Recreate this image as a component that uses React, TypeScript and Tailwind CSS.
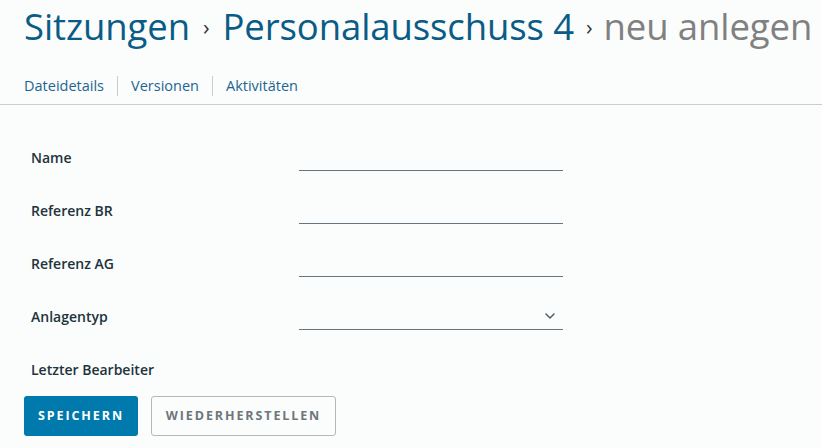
import { ChevronDown } from "lucide-react";

const fields = [
  { label: "Name", kind: "text" },
  { label: "Referenz BR", kind: "text" },
  { label: "Referenz AG", kind: "text" },
  { label: "Anlagentyp", kind: "select" },
  { label: "Letzter Bearbeiter", kind: "none" },
];

const tabs = ["Dateidetails", "Versionen", "Aktivitäten"];

function FormRow({ label, kind }: { label: string; kind: string }) {
  return (
    <div className="flex h-7 items-center">
      <label className="w-[268px] shrink-0 text-[14px] font-semibold text-[#21333b]">{label}</label>
      {kind !== "none" && (
        <div className="relative flex h-7 w-[264px] items-center border-b border-[#66757d]">
          {kind === "select" && (
            <ChevronDown className="absolute right-[5px] h-4 w-4 text-[#4e5d66]" strokeWidth={2.2} />
          )}
        </div>
      )}
    </div>
  );
}

export default function App() {
  return (
    <div className="min-h-[448px] bg-[#fbfcfc] font-['Open_Sans',sans-serif]">
      <header className="px-6 pt-[5px]">
        <h1 className="flex items-center whitespace-nowrap text-[36.5px] leading-[42px] tracking-[-0.1px]">
          <span className="text-[#0a5c86]">Sitzungen</span>
          <span className="mx-[13px] text-[22px] text-[#333]">›</span>
          <span className="text-[#0a5c86]">Personalausschuss 4</span>
          <span className="ml-[12px] mr-[11px] text-[22px] text-[#333]">›</span>
          <span className="text-[#808080]">neu anlegen</span>
        </h1>
      </header>

      <nav className="mt-[29px] flex h-[29px] items-start border-b border-[#cccccc] px-6">
        {tabs.map((t, i) => (
          <div key={t} className="flex items-center">
            {i > 0 && <span className="ml-[13px] mr-[13px] h-5 w-px bg-[#cccccc]" />}
            <span className="text-[14.5px] leading-5 text-[#1b6690]">{t}</span>
          </div>
        ))}
      </nav>

      <form className="flex flex-col gap-[25px] pl-[31px] pt-[38px]">
        {fields.map((f) => (
          <FormRow key={f.label} label={f.label} kind={f.kind} />
        ))}
      </form>

      <div className="mt-[13px] flex gap-[13px] px-6">
        <button
          type="button"
          className="h-10 w-[114px] rounded-[3px] bg-[#0079ad] text-[12.5px] font-bold tracking-[1.9px] text-white"
        >
          SPEICHERN
        </button>
        <button
          type="button"
          className="h-10 w-[185px] rounded-[3px] border border-[#b3b8bb] text-[12.5px] font-bold tracking-[1.9px] text-[#6d767b]"
        >
          WIEDERHERSTELLEN
        </button>
      </div>
    </div>
  );
}
